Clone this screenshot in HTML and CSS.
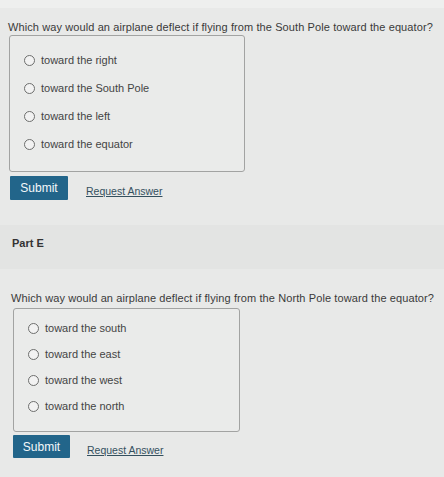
FILE: index.html
```html
<!DOCTYPE html>
<html>
<head>
    <link rel="stylesheet" href="styles.css">
</head>
<body>
    <div class="topbar"></div>

    <div class="part part-d">
        <p class="question">Which way would an airplane deflect if flying from the South Pole toward the equator?</p>

        <div class="choices">
            <label class="choice"><span class="radio"></span>toward the right</label>
            <label class="choice"><span class="radio"></span>toward the South Pole</label>
            <label class="choice"><span class="radio"></span>toward the left</label>
            <label class="choice"><span class="radio"></span>toward the equator</label>
        </div>

        <div class="actions">
            <button class="submit">Submit</button>
            <a class="request" href="#">Request Answer</a>
        </div>
    </div>

    <div class="part-header">Part E</div>

    <div class="part part-e">
        <p class="question">Which way would an airplane deflect if flying from the North Pole toward the equator?</p>

        <div class="choices">
            <label class="choice"><span class="radio"></span>toward the south</label>
            <label class="choice"><span class="radio"></span>toward the east</label>
            <label class="choice"><span class="radio"></span>toward the west</label>
            <label class="choice"><span class="radio"></span>toward the north</label>
        </div>

        <div class="actions">
            <button class="submit">Submit</button>
            <a class="request" href="#">Request Answer</a>
        </div>
    </div>
</body>
</html>
```

FILE: styles.css
```css
html {
    background-color: #e8e9e8;
}

body {
    margin: 0;
    background-color: #e8e9e8;
    font-family: "Liberation Sans", Arial, sans-serif;
    color: #3a3a3a;
}

.topbar {
    height: 8px;
    background-color: #eeefee;
}

.question {
    margin: 0;
    font-size: 11px;
    line-height: 12px;
    letter-spacing: 0.1px;
    white-space: nowrap;
}

.part-d .question {
    padding: 13px 0 0 8px;
}

.choices {
    box-sizing: border-box;
    border: 1px solid #a2a3a2;
    border-radius: 3px;
    background-color: #eaebea;
}

.part-d .choices {
    margin: 2px 0 0 9px;
    width: 236px;
    padding: 10px 0 13px 14px;
}

.choice {
    display: flex;
    align-items: center;
    gap: 6px;
    height: 28px;
    font-size: 11px;
    color: #444;
}

.part-e .choice {
    height: 26px;
}

.radio {
    box-sizing: border-box;
    width: 11px;
    height: 11px;
    border: 1px solid #6d6e6d;
    border-radius: 50%;
    background-color: #f2f2f2;
}

.actions {
    display: flex;
    align-items: center;
    gap: 18px;
}

.part-d .actions {
    margin: 4px 0 0 10px;
}

.submit {
    height: 24px;
    width: 58px;
    padding: 0;
    border: none;
    border-radius: 1px;
    background-color: #22658a;
    color: #f4f8fa;
    font-family: "Liberation Sans", Arial, sans-serif;
    font-size: 12px;
}

.request {
    margin-top: 6px;
    font-size: 10.5px;
    color: #34505e;
    text-decoration: underline;
}

.part-header {
    margin-top: 25px;
    height: 44px;
    box-sizing: border-box;
    padding: 12px 0 0 12px;
    background-color: #e3e4e3;
    font-size: 11px;
    font-weight: bold;
    line-height: 12px;
    color: #333;
}

.part-e .question {
    padding: 23px 0 0 11px;
}

.part-e .choices {
    margin: 4px 0 0 13px;
    width: 227px;
    padding: 6px 0 12px 14px;
}

.part-e .actions {
    margin: 3px 0 0 13px;
    gap: 17px;
}

.part-e .submit {
    height: 23px;
    width: 57px;
}
```
